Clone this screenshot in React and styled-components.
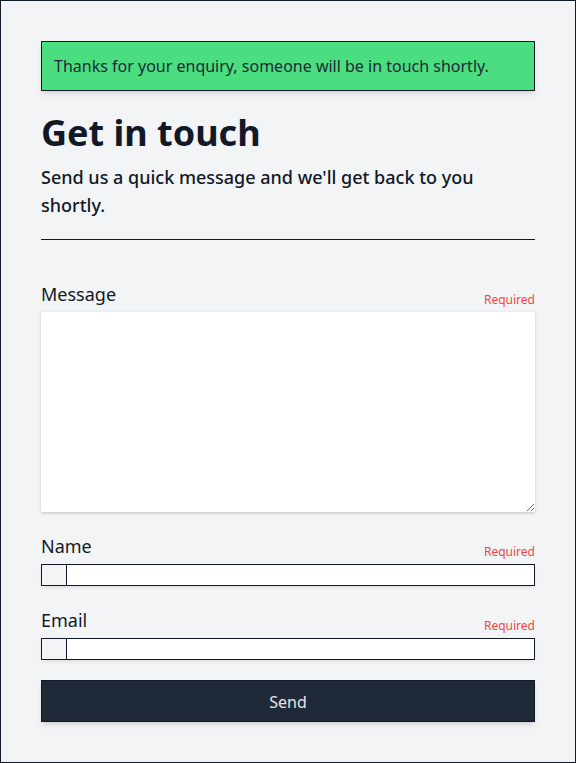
import React from "react";
import styled, { createGlobalStyle } from "styled-components";

const Global = createGlobalStyle`
  html, body { margin: 0; padding: 0; background: #f3f4f6; }
  body { font-family: "Noto Sans", "Open Sans", sans-serif; color: #111827; }
  * { box-sizing: border-box; }
`;

const Page = styled.div`
  min-height: 763px;
  border: 1px solid #111827;
  background: #f3f4f6;
  padding: 40px 40px 40px;
`;

const Alert = styled.div`
  background: #4ade80;
  border: 1px solid #111827;
  padding: 12px 12px;
  font-size: 16px;
  line-height: 24px;
  color: #1f2937;
  box-shadow: 0 4px 6px -1px rgba(0,0,0,0.1), 0 2px 4px -2px rgba(0,0,0,0.1);
`;

const Title = styled.h1`
  margin: 20px 0 0;
  font-size: 36px;
  line-height: 44px;
  font-weight: 700;
  color: #111827;
`;

const Lead = styled.p`
  margin: 8px 0 0;
  max-width: 448px;
  font-size: 18px;
  line-height: 28px;
  font-weight: 500;
  color: #111827;
`;

const Rule = styled.hr`
  margin: 20px 0 0;
  border: 0;
  border-top: 1px solid #111827;
`;

const Form = styled.form`
  display: flex;
  flex-direction: column;
  gap: 20px;
  margin-top: 40px;
`;

const Field = styled.div`
  display: flex;
  flex-direction: column;
`;

const LabelRow = styled.div`
  display: flex;
  justify-content: space-between;
  align-items: flex-end;
  margin-bottom: 4px;
`;

const Label = styled.label`
  font-size: 18px;
  line-height: 28px;
  color: #111827;
`;

const Required = styled.span`
  font-size: 12px;
  line-height: 16px;
  color: #ef4444;
`;

const TextArea = styled.textarea`
  display: block;
  width: 100%;
  height: 200px;
  border: none;
  background: #fff;
  font-family: inherit;
  box-shadow: 0 1px 3px 0 rgba(0,0,0,0.15), 0 2px 4px -1px rgba(0,0,0,0.08);
  outline: none;
`;

const InputBox = styled.div`
  display: flex;
  height: 22px;
  border: 1px solid #111827;
  background: #fff;
  box-shadow: 0 2px 4px -1px rgba(0,0,0,0.12);
`;

const Prefix = styled.span`
  width: 25px;
  flex: none;
  background: #f3f4f6;
  border-right: 1px solid #111827;
`;

const Input = styled.input`
  flex: 1;
  min-width: 0;
  border: none;
  background: #fff;
  padding: 0 4px;
  font-family: inherit;
  outline: none;
`;

const Send = styled.button`
  height: 42px;
  width: 100%;
  padding: 2px 0 0;
  background: #1f2937;
  color: #e5e7eb;
  border: 1px solid #111827;
  font-family: inherit;
  font-size: 16px;
  box-shadow: 0 4px 6px -1px rgba(0,0,0,0.1), 0 2px 4px -2px rgba(0,0,0,0.1);
`;

function TextField({ label, type }) {
  return (
    <Field>
      <LabelRow>
        <Label>{label}</Label>
        <Required>Required</Required>
      </LabelRow>
      <InputBox>
        <Prefix />
        <Input type={type} />
      </InputBox>
    </Field>
  );
}

export default function App() {
  return (
    <>
      <Global />
      <Page>
        <Alert>Thanks for your enquiry, someone will be in touch shortly.</Alert>
        <Title>Get in touch</Title>
        <Lead>Send us a quick message and we'll get back to you shortly.</Lead>
        <Rule />
        <Form onSubmit={(e) => e.preventDefault()}>
          <Field>
            <LabelRow>
              <Label>Message</Label>
              <Required>Required</Required>
            </LabelRow>
            <TextArea />
          </Field>
          <TextField label="Name" type="text" />
          <TextField label="Email" type="email" />
          <Send type="submit">Send</Send>
        </Form>
      </Page>
    </>
  );
}
